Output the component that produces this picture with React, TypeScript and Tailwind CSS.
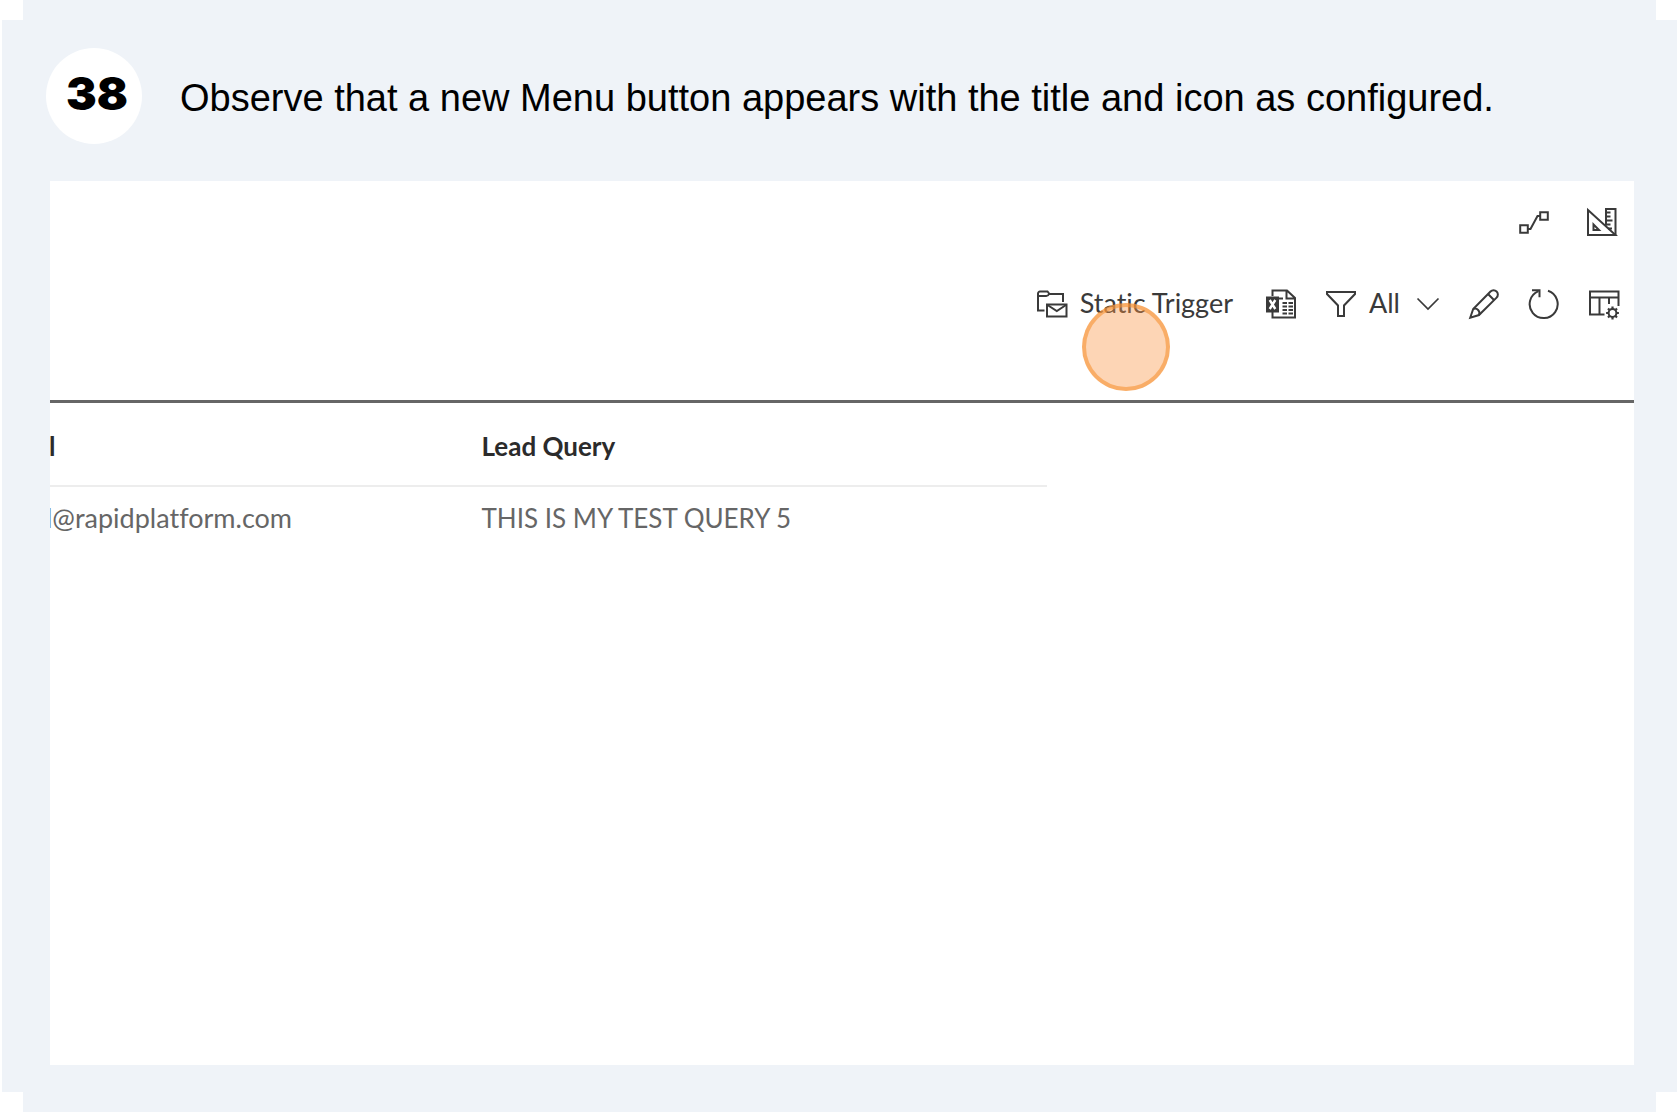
import type { ReactNode } from "react";

function Icon({ children }: { children: ReactNode }) {
  return (
    <svg
      viewBox="0 0 32 32"
      className="size-8 shrink-0"
      fill="none"
      stroke="currentColor"
      strokeWidth="2"
      aria-hidden="true"
    >
      {children}
    </svg>
  );
}

const FlowIcon = () => (
  <Icon>
    <path d="M2.2 19.2h7.6v7.6H2.2zM22.2 6.2h7.6v7.6h-7.6z" />
    <path d="M10 23h2.5l7-13H22" />
  </Icon>
);

const DesignIcon = () => (
  <Icon>
    <path d="M2 4v25h27.500z" />
    <path d="M20 19.500V3h9.500v26H27" />
    <path d="M7.500 18.500v5.500h5.500z" />
    <path d="M20 6.500h4.500M20 10.500h4.500M20 14.500h6.500M20 18.500h4.500M22 22.500h4" />
  </Icon>
);

const MailFolderIcon = () => (
  <Icon>
    <path d="M8.500 22.500H2V5.500a2 2 0 0 1 2-2h7.500l2 2.500H27V14M2.500 8h7.500a3 3 0 0 0 3-2" />
    <path d="M11 16.500h19.500v12H11z" />
    <path d="M11.500 17l9.300 6 9.200-6" />
  </Icon>
);

const ExcelIcon = () => (
  <Icon>
    <path d="M7.500 8V2.500H22l8 7.500v19.500H7.500V24M21.500 3v7.500H30" />
    <path d="M1 8.500h13v16H1z" fill="currentColor" stroke="none" />
    <path d="M4.700 12l5.600 9M10.300 12l-5.600 9" stroke="white" strokeWidth="2.400" />
    <path d="M14 10.500h4M17.500 15h4.500M23.500 15h4.500M17.500 18.500h4.500M23.500 18.500h4.500M17.500 22h4.500M23.500 22h4.500M17.500 25.500h4.500M23.500 25.500h4.500" />
  </Icon>
);

const FilterIcon = () => (
  <Icon>
    <path d="M2 4h28v2L19 17.500V28h-6V17.500L2 6z" />
  </Icon>
);

const ChevronIcon = () => (
  <Icon>
    <path d="M5.500 10.500L16 21l10.500-10.500" strokeWidth="1.700" />
  </Icon>
);

const PencilIcon = () => (
  <Icon>
    <path d="M2.200 29.800l3-8.800L22.500 3.500a4.300 4.300 0 0 1 6.100 6.100L11 27z" />
    <path d="M20 6l6 6M5.200 21a4.500 4.500 0 0 1 5.800 6" />
  </Icon>
);

const RefreshIcon = () => (
  <Icon>
    <path d="M20 2.800a14 14 0 1 1-9.500 .3" />
    <path d="M4 2.200h7.500v7" />
  </Icon>
);

const TableSettingsIcon = () => (
  <Icon>
    <path d="M16.500 26.500H2V3.500h28.500V18M2 9.500h28.500M11.500 9.500V26.500M21 9.500V16" />
    <circle cx="24.500" cy="25" r="3.900" />
    <path
      d="M24.500 18.600v2.600M24.500 28.800v2.600M18.100 25h2.600M28.300 25h2.600M20 20.500l2 2M27 27.500l2 2M29 20.500l-2 2M22 27.500l-2 2"
      strokeWidth="2.200"
    />
  </Icon>
);

function IconButton({ label, children }: { label: string; children: ReactNode }) {
  return (
    <button type="button" aria-label={label} className="flex items-center">
      {children}
    </button>
  );
}

export default function App() {
  return (
    <main className="flex min-h-screen flex-col bg-white pr-[3px] pb-1 pl-[2px] font-['Liberation_Sans',sans-serif] text-black">
      <div className="mx-[21px] h-5 bg-[#eff3f8]" />

      <section className="flex grow flex-col bg-[#eff3f8] px-12">
        <header className="-ml-1 flex h-[161px] items-start gap-[38px] pt-7">
          <span className="flex size-24 shrink-0 items-center justify-center rounded-full bg-white pb-[6px] pl-[6px] font-['Inter',sans-serif] text-[46px] font-black">
            38
          </span>
          <h1 className="pt-[25px] text-[38px] leading-[50px]">
            Observe that a new Menu button appears with the title and icon as configured.
          </h1>
        </header>

        <div className="mr-[-5px] grow overflow-hidden bg-white pb-6 font-['Lato',sans-serif] text-[26px] text-[#3a3a3a] [font-variant-ligatures:none]">
          <div className="border-b-3 border-[#666666]">
            <nav aria-label="Page tools" className="flex h-[82px] items-center justify-end gap-9 pr-4">
              <IconButton label="Workflow"><FlowIcon /></IconButton>
              <IconButton label="Designer"><DesignIcon /></IconButton>
            </nav>
            <div className="mb-14 flex h-[81px] items-center justify-end gap-7 pr-[14px] text-[27px]">
              <button type="button" className="relative mr-1 flex items-center gap-3">
                <MailFolderIcon />
                <span>Static Trigger</span>
                <span className="absolute top-5 left-[46px] size-[88px] rounded-full border-4 border-[#f69233]/60 bg-[#fa9646]/40" />
              </button>
              <IconButton label="Export to Excel"><ExcelIcon /></IconButton>
              <button type="button" className="-mr-1 flex items-center gap-3">
                <FilterIcon />
                <span>All</span>
                <ChevronIcon />
              </button>
              <IconButton label="Edit"><PencilIcon /></IconButton>
              <IconButton label="Refresh"><RefreshIcon /></IconButton>
              <IconButton label="Table settings"><TableSettingsIcon /></IconButton>
            </div>
          </div>

          <table className="-ml-1 w-[63.200%] table-fixed text-left">
            <thead>
              <tr className="h-[83px] border-b-2 border-[#ededed] text-[#2b2b2b]">
                <th className="w-[43.500%] pt-1 pl-[3px] font-bold">l</th>
                <th className="pt-1 font-bold">Lead Query</th>
              </tr>
            </thead>
            <tbody>
              <tr className="h-16 text-[#666666]">
                <td className="text-[27px]">l@rapidplatform.com</td>
                <td>THIS IS MY TEST QUERY 5</td>
              </tr>
            </tbody>
          </table>
        </div>
        <div className="h-[27px]" />
      </section>

      <div className="mx-[21px] h-5 bg-[#eff3f8]" />
    </main>
  );
}
